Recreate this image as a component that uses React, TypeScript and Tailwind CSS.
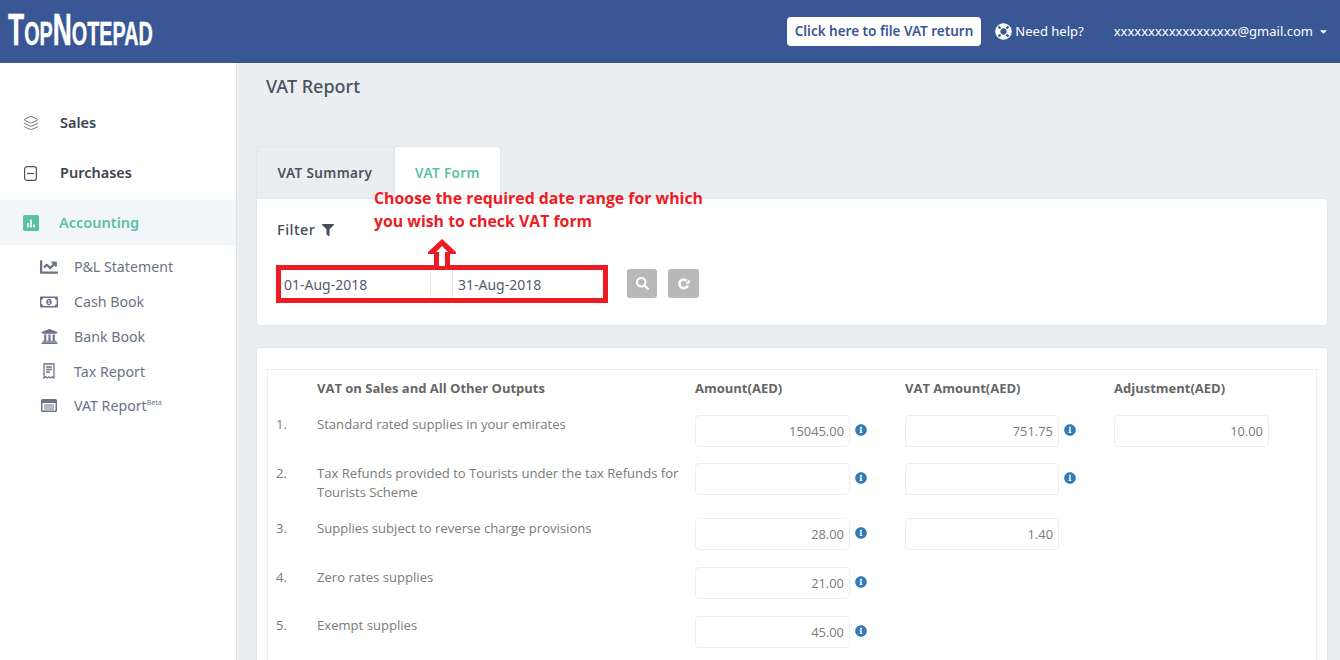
import { FaCaretDown, FaChartLine, FaFilter, FaInfoCircle, FaLifeRing, FaRegMoneyBillAlt, FaSearch, FaUniversity } from "react-icons/fa";
import { Layers } from "lucide-react";
import type { ReactNode } from "react";

const sans = "font-['Noto_Sans',sans-serif]";
const openSans = "font-['Open_Sans',sans-serif]";

function TaxIcon() {
    return (
        <svg width="12" height="17" viewBox="0 0 12 17" fill="none" stroke="#6b7285" strokeWidth="1.3">
            <path d="M1 1h10v14l-1.7-1.2L7.6 15 6 13.8 4.4 15l-1.7-1.2L1 15z" />
            <path d="M3 4h6M3 6.5h6M3 9h4" />
        </svg>
    );
}

function VatIcon() {
    return (
        <svg width="16" height="13" viewBox="0 0 16 13">
            <rect x="0" y="0" width="16" height="13" rx="1.5" fill="#6b7285" />
            <rect x="1.5" y="4" width="13" height="7.5" fill="#fff" />
            <path d="M3 6h10M3 8h10M3 10h10" stroke="#6b7285" strokeWidth="1" />
        </svg>
    );
}

function PurchasesIcon() {
    return (
        <svg width="13" height="15" viewBox="0 0 13 15" fill="none" stroke="#4a5160" strokeWidth="1.2">
            <rect x="0.6" y="0.6" width="11.8" height="13.8" rx="2.5" />
            <path d="M3 7.5h7" />
        </svg>
    );
}

function AccountingIcon() {
    return (
        <svg width="16" height="16" viewBox="0 0 16 16">
            <rect width="16" height="16" rx="2" fill="#5bbfa6" />
            <path d="M5 8v4.5M8 4.5v8M11 9.5v3" stroke="#fff" strokeWidth="1.6" />
        </svg>
    );
}

function RefreshIcon() {
    return (
        <svg width="13" height="13" viewBox="0 0 12 12" fill="none" stroke="#fff" strokeWidth="2.4">
            <path d="M10 7.6A4 4 0 1 1 9 3.4" />
            <path d="M11.7 2v4h-4z" fill="#fff" stroke="none" />
        </svg>
    );
}

const subItems: { label: string; icon: ReactNode; beta?: boolean }[] = [
    { label: "P&L Statement", icon: <FaChartLine size={18} /> },
    { label: "Cash Book", icon: <FaRegMoneyBillAlt size={18} /> },
    { label: "Bank Book", icon: <FaUniversity size={17} /> },
    { label: "Tax Report", icon: <TaxIcon /> },
    { label: "VAT Report", icon: <VatIcon />, beta: true },
];

function Sidebar() {
    return (
        <aside className={`w-[237px] shrink-0 bg-white border-r border-[#dfe3e8] pt-[35px] ${sans}`}>
            <div className="flex items-center h-[50px] pl-[23px] gap-[21px] text-[14.5px] font-semibold text-[#3d4453]">
                <Layers size={16} strokeWidth={1.3} className="text-[#555c6b]" />
                Sales
            </div>
            <div className="flex items-center h-[50px] pl-[24px] gap-[23px] text-[14.5px] font-semibold text-[#3d4453]">
                <PurchasesIcon />
                Purchases
            </div>
            <div className="flex items-center h-[45px] mt-[2px] pl-[23px] gap-[20px] text-[14.5px] font-semibold text-[#5bbfa6] bg-[#f3f6f9]">
                <AccountingIcon />
                Accounting
            </div>
            <ul className="pt-[4px]">
                {subItems.map((item) => (
                    <li key={item.label} className="flex items-center h-[35px] last:-mt-[1px] text-[14.2px] text-[#6b7285]">
                        <span className="w-[74px] pl-[40px] shrink-0 flex justify-start">
                            <span className="w-[18px] flex justify-center">{item.icon}</span>
                        </span>
                        {item.label}
                        {item.beta && <span className="text-[7px] -mt-[4px]">Beta</span>}
                    </li>
                ))}
            </ul>
        </aside>
    );
}

function AmountInput({ value, className = "w-[155px]" }: { value?: string; className?: string }) {
    return (
        <div className={`${className} h-[32px] bg-white border border-[#eceef0] rounded-[4px] flex items-center justify-end pr-[5px] text-[12.9px] text-[#7a7a7a]`}>
            {value}
        </div>
    );
}

function AmountCell({ value, info = true, className }: { value?: string; info?: boolean; className?: string }) {
    return (
        <div className="flex items-start">
            <AmountInput value={value} className={className} />
            {info && <FaInfoCircle size={12} className="text-[#337ab7] ml-[5px] mt-[9px]" />}
        </div>
    );
}

const rows = [
    { no: "1.", text: "Standard rated supplies in your emirates", amount: "15045.00", vat: "751.75", vatInfo: true, adj: "10.00", h: "h-[48px]", pad: "" },
    { no: "2.", text: "Tax Refunds provided to Tourists under the tax Refunds for Tourists Scheme", amount: "", vat: "", vatInfo: true, h: "h-[55px]", pad: "pt-[1px]" },
    { no: "3.", text: "Supplies subject to reverse charge provisions", amount: "28.00", vat: "1.40", vatInfo: false, h: "h-[49px]", pad: "pt-[1px]" },
    { no: "4.", text: "Zero rates supplies", amount: "21.00", h: "h-[49px]", pad: "pt-[1px]" },
    { no: "5.", text: "Exempt supplies", amount: "45.00", h: "h-[49px]", pad: "" },
];

function VatTable() {
    return (
        <div className={`border border-[#eeeeee] ${openSans}`}>
            <div className="grid grid-cols-[49px_378px_210px_209px_1fr] h-[45px] items-center text-[13px] font-bold text-[#666666] pb-[7px]">
                <span />
                <span>VAT on Sales and All Other Outputs</span>
                <span>Amount(AED)</span>
                <span>VAT Amount(AED)</span>
                <span>Adjustment(AED)</span>
            </div>
            {rows.map((row) => (
                <div key={row.no} className={`grid grid-cols-[49px_378px_210px_209px_1fr] ${row.h} text-[13.1px] leading-[19px] text-[#7a7a7a]`}>
                    <span className={`pl-[8px] ${row.pad}`}>{row.no}</span>
                    <span className={`pr-[14px] ${row.pad}`}>{row.text}</span>
                    <AmountCell value={row.amount} />
                    {row.vat !== undefined ? <AmountCell value={row.vat} info={row.vatInfo} className="w-[154px]" /> : <span />}
                    {row.adj ? <AmountCell value={row.adj} info={false} /> : <span />}
                </div>
            ))}
        </div>
    );
}

function FilterPanel() {
    return (
        <div className="relative bg-white border border-[#e3e6ea] rounded-b-[4px] rounded-tr-[4px] h-[128px] px-[20px] pt-[20px]">
            <div className={`flex items-center gap-[6px] text-[14.5px] font-medium tracking-[0.5px] text-[#444b59] ${sans}`}>
                Filter <FaFilter size={12} className="text-[#444b59]" />
            </div>
            <div className="flex items-center mt-[24px]">
                {/* date range, outlined in red by the callout */}
                <div className={`flex w-[332px] h-[38px] border-[5px] border-[#ed1c24] -ml-[1px] text-[14px] text-[#555c6b] ${sans}`}>
                    <div className="w-[150px] pl-[3px] pt-[2px] flex items-center border-r border-[#e6e6e6]">01-Aug-2018</div>
                    <div className="w-[21px]" />
                    <div className="flex-1 pl-[5px] pt-[2px] flex items-center border-l border-[#e6e6e6]">31-Aug-2018</div>
                </div>
                <button className="ml-[19px] w-[30px] h-[29px] mb-[1px] rounded-[3px] bg-[#b8b8b8] flex items-center justify-center">
                    <FaSearch size={13} className="text-white" />
                </button>
                <button className="ml-[11px] w-[31px] h-[29px] mb-[1px] rounded-[3px] bg-[#b8b8b8] flex items-center justify-center">
                    <RefreshIcon />
                </button>
            </div>
            {/* callout over the filter */}
            <div className={`absolute left-[117px] -top-[12px] text-[15.85px] leading-[23px] font-bold text-[#ed1c24] whitespace-nowrap ${openSans}`}>
                <p>Choose the required date range for which</p>
                <p>you wish to check VAT form</p>
            </div>
            <svg className="absolute left-[171px] top-[40px]" width="28" height="27" viewBox="0 0 28 27" fill="#ed1c24">
                <path d="M14 0 28 13v2h-6v12H6V15H0v-2z" />
                <path d="M14 7l6 6h-3v14h-6V13H8z" fill="#fff" />
            </svg>
        </div>
    );
}

export default function App() {
    return (
        <div className="h-[660px] overflow-hidden flex flex-col bg-[#ebeef1]">
            <header className={`h-[63px] shrink-0 bg-[#3a5795] flex items-center text-white ${sans}`}>
                <div className="w-[160px] pl-[8px] pb-[4px] overflow-visible">
                    <div className="origin-left scale-x-[0.6] whitespace-nowrap font-['Liberation_Sans',sans-serif] font-bold leading-none w-[250px] [-webkit-text-stroke:0.4px_white]">
                        <span className="text-[44px]">T</span>
                        <span className="text-[33px]">OP</span>
                        <span className="text-[44px]">N</span>
                        <span className="text-[33px]">OTEPAD</span>
                    </div>
                </div>
                <div className="ml-auto flex items-center">
                    <a className="h-[29px] px-[8px] rounded-[4px] bg-white text-[#3a5795] text-[13.5px] font-semibold flex items-center">
                        Click here to file VAT return
                    </a>
                    <span className="ml-[14px] flex items-center gap-[3px] text-[13px]">
                        <FaLifeRing size={17} />
                        Need help?
                    </span>
                    <span className="ml-[30px] mr-[11px] flex items-center gap-[5px] text-[13px]">
                        xxxxxxxxxxxxxxxxxx@gmail.com
                        <FaCaretDown size={11} />
                    </span>
                </div>
            </header>
            <div className="flex flex-1 min-h-0">
                <Sidebar />
                <main className="flex-1 min-w-0 pl-[19px] pr-[12px]">
                    <h1 className={`pl-[10px] pt-[10px] h-[83px] text-[18px] font-medium text-[#4a5160] ${sans}`}>VAT Report</h1>
                    <div className={`flex h-[52px] text-[13.5px] font-semibold tracking-[0.4px] ${sans}`}>
                        <div className="w-[138px] pt-[1px] border border-b-0 border-[#e3e6ea] rounded-tl-[4px] flex items-center justify-center text-[#4a5160]">VAT Summary</div>
                        <div className="w-[107px] pt-[1px] bg-white border border-b-0 border-[#e3e6ea] rounded-t-[4px] flex items-center justify-center text-[#5bbfa6]">VAT Form</div>
                    </div>
                    <FilterPanel />
                    <section className="mt-[21px] bg-white border border-[#e3e6ea] rounded-[4px] p-[10px] pt-[21px] h-[400px]">
                        <VatTable />
                    </section>
                </main>
            </div>
        </div>
    );
}
